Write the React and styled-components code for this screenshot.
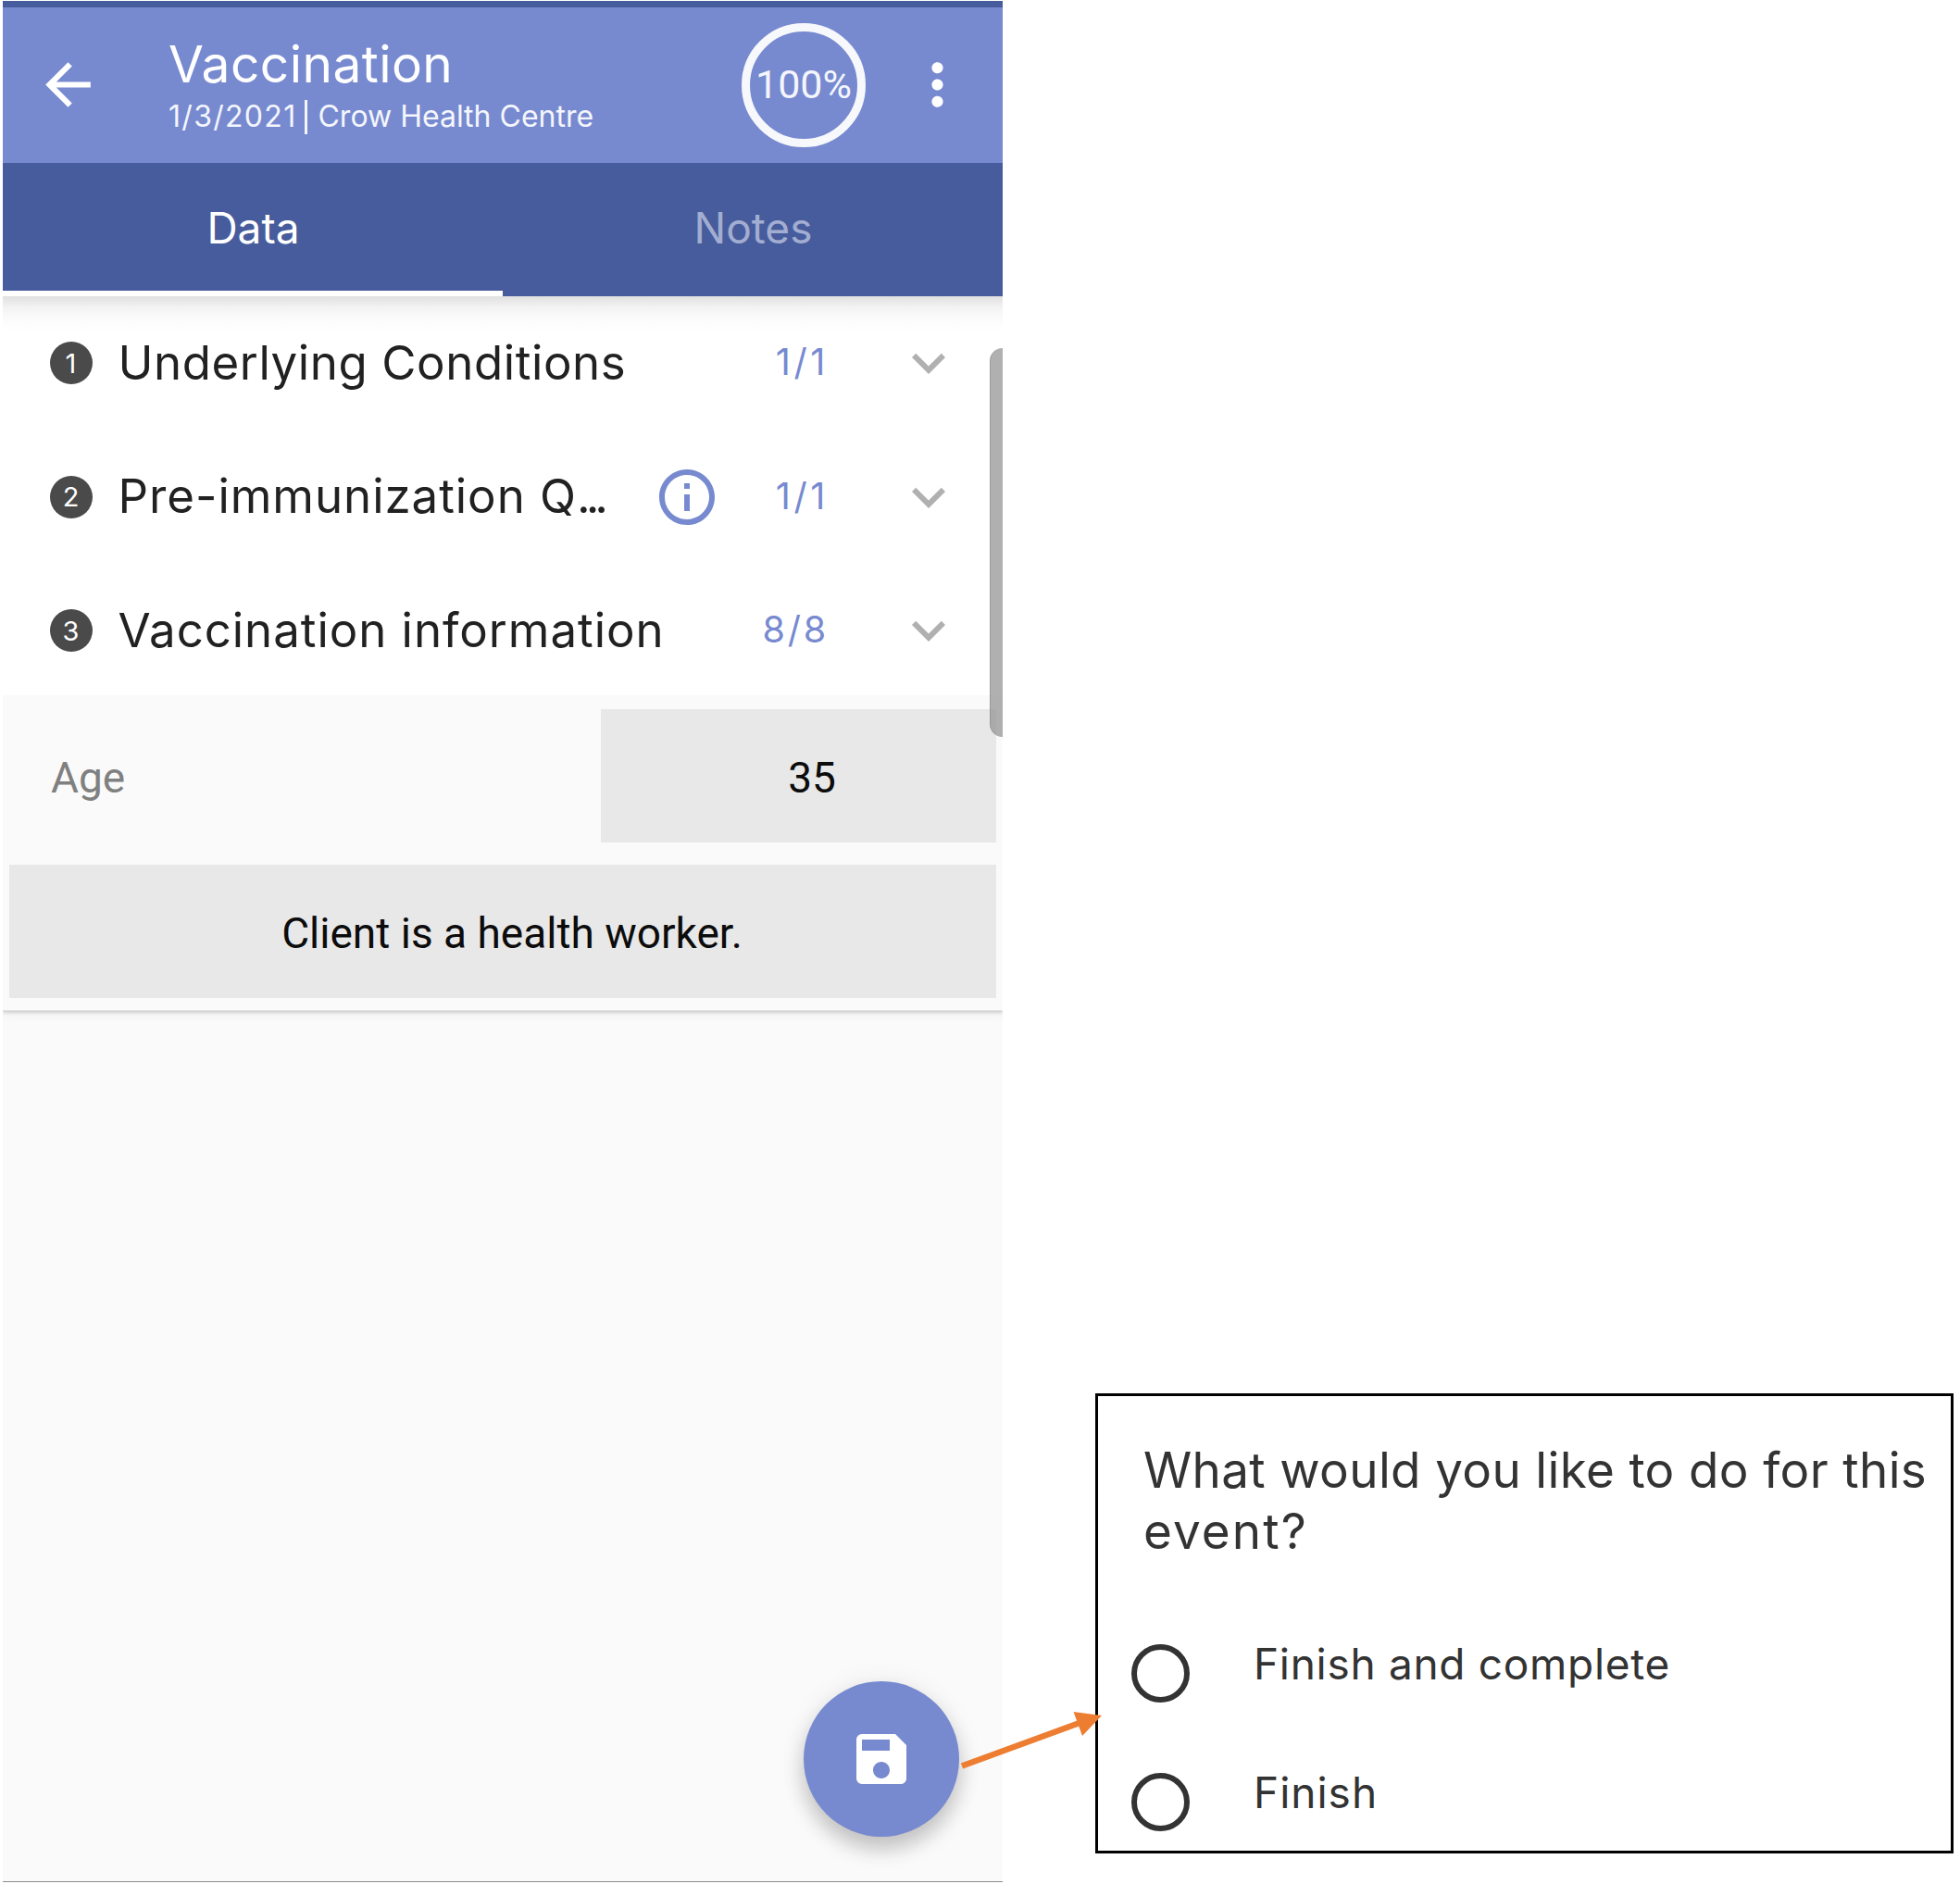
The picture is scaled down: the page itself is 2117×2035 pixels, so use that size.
import React from 'react';
import styled, { createGlobalStyle } from 'styled-components';
import { MdArrowBack, MdExpandMore, MdInfoOutline, MdMoreVert, MdSave } from 'react-icons/md';

const colors = {
  primary: '#778ad0',
  primaryDark: '#475c9c',
  surface: '#fafafa',
  field: '#e8e8e8',
  ink: '#212121',
};

const GlobalStyle = createGlobalStyle`
  * { box-sizing: border-box; }
  body {
    margin: 0;
    background: #ffffff;
    font-family: Inter, Roboto, sans-serif;
    font-weight: 400;
    overflow: hidden;
  }
  svg { display: block; flex: none; }
`;

const Page = styled.main`
  position: relative;
  display: flex;
  align-items: flex-start;
  gap: 100px;
  width: 2117px;
  height: 2035px;
  padding: 1px 0 0 3px;
`;

const Phone = styled.section`
  position: relative;
  display: flex;
  flex-direction: column;
  width: 1080px;
  height: 2032px;
  background: ${colors.surface};
  border-bottom: 1px solid #8c8c8c;
`;

const StatusBar = styled.div`
  height: 7px;
  background: ${colors.primaryDark};
`;

const AppBar = styled.header`
  display: flex;
  align-items: center;
  height: 168px;
  padding: 0 34px 1px;
  color: #ffffff;
  background: ${colors.primary};
`;

const Heading = styled.div`
  flex: 1;
  margin-left: 72px;
  padding-top: 2px;
`;

const Title = styled.h1`
  margin: 0 0 7px;
  font-size: 55px;
  font-weight: 400;
  line-height: 60px;
  letter-spacing: 0.45px;
`;

const Subtitle = styled.div`
  display: flex;
  align-items: center;
  height: 40px;
  font-size: 32px;
  line-height: 40px;
  color: #f4f6fc;
`;

const EventDate = styled.span`
  letter-spacing: 1.3px;
`;

const Separator = styled.span`
  width: 3px;
  height: 37px;
  margin: 0 11px 0 9px;
  background: #f4f6fc;
`;

const Progress = styled.div`
  display: flex;
  align-items: center;
  justify-content: center;
  width: 134px;
  height: 134px;
  margin-right: 41px;
  padding-bottom: 1px;
  border: 9px solid #f7f8fc;
  border-radius: 50%;
  font-family: Roboto, sans-serif;
  font-size: 43px;
  color: #f4f6fc;
`;

const Tabs = styled.nav`
  display: grid;
  grid-template-columns: 1fr 1fr;
  height: 144px;
  background: ${colors.primaryDark};
`;

const Tab = styled.div`
  display: flex;
  align-items: center;
  justify-content: center;
  padding: 1px 0 0 1px;
  border-bottom: 6px solid ${(p) => (p.$active ? '#ffffff' : 'transparent')};
  font-size: 46px;
  color: ${(p) => (p.$active ? '#ffffff' : '#a2add1')};
`;

const SectionList = styled.div`
  height: 431px;
  background: linear-gradient(#e0e0e0 0, #f3f3f3 12px, #fbfbfb 24px, #ffffff 38px);
`;

const SectionRow = styled.div`
  display: flex;
  align-items: center;
  height: 144.5px;
  padding: 0 44px 0 50.5px;
`;

const Badge = styled.span`
  display: flex;
  align-items: center;
  justify-content: center;
  width: 46px;
  height: 46px;
  border-radius: 50%;
  font-size: 29px;
  color: #ffffff;
  background: #4a4a4a;
`;

const SectionTitle = styled.span`
  flex: 1;
  margin-left: 28px;
  padding-bottom: 2px;
  font-size: 51px;
  letter-spacing: ${(p) => p.$tracking}px;
  white-space: nowrap;
  color: ${colors.ink};
`;

const Ellipsis = styled.span`
  letter-spacing: -5px;
`;

const InfoIcon = styled(MdInfoOutline)`
  margin-right: 31px;
  color: ${colors.primary};
`;

const Count = styled.span`
  width: 86px;
  margin-right: 72px;
  padding-bottom: 2px;
  font-size: 39.5px;
  letter-spacing: ${(p) => p.$tracking}px;
  text-align: right;
  color: ${colors.primary};
`;

const Fields = styled.div`
  display: flex;
  flex-direction: column;
  gap: 24px;
  height: 341px;
  padding: 15px 7px 0;
  border-bottom: 1px solid #e2e2e2;
  box-shadow: 0 2px 3px #cfcfcf, 0 4px 10px #f0f0f0;
  clip-path: inset(0 0 -20px 0);
  background: ${colors.surface};
`;

const Field = styled.div`
  display: flex;
  height: 144px;
  font-family: Roboto, sans-serif;
  font-size: 46px;
`;

const FieldLabel = styled.span`
  display: flex;
  align-items: center;
  width: 639px;
  padding: 4px 0 0 45px;
  color: #808080;
`;

const FieldValue = styled.span`
  display: flex;
  flex: 1;
  align-items: center;
  justify-content: center;
  padding: 4px 0 0 ${(p) => p.$inset}px;
  color: #0c0c0c;
  background: ${colors.field};
`;

const ScrollThumb = styled.div`
  position: absolute;
  top: 375px;
  right: 0;
  width: 14px;
  height: 420px;
  border-left: 1px solid rgba(0, 0, 0, 0.12);
  border-radius: 14px 0 0 14px;
  background: rgba(145, 145, 145, 0.72);
`;

const SaveButton = styled.button`
  position: absolute;
  right: 47px;
  bottom: 48px;
  display: flex;
  align-items: center;
  justify-content: center;
  width: 168px;
  height: 168px;
  padding: 0;
  border: 0;
  border-radius: 50%;
  color: #ffffff;
  background: ${colors.primary};
  box-shadow: 0 14px 22px rgba(0, 0, 0, 0.2), 0 2px 30px rgba(0, 0, 0, 0.07);
`;

const Dialog = styled.section`
  width: 927px;
  height: 497px;
  margin-top: 1504px;
  padding: 47px 0 0 36px;
  border: 3px solid #000000;
  background: #ffffff;
  color: #333333;
`;

const Question = styled.h2`
  margin: 0 0 84px 13px;
  font-size: 53px;
  font-weight: 400;
  line-height: 66px;
  letter-spacing: 0.35px;
  white-space: nowrap;
`;

const LastWord = styled.span`
  letter-spacing: 2.1px;
`;

const Option = styled.div`
  display: flex;
  height: 138.5px;
  font-size: 46px;
  line-height: 52px;
`;

const Radio = styled.span`
  width: 63px;
  height: 63px;
  margin: 5px 69px 0 0;
  border: 6px solid #333333;
  border-radius: 50%;
`;

const OptionLabel = styled.span`
  letter-spacing: ${(p) => p.$tracking}px;
`;

const Callout = styled.svg`
  position: absolute;
  left: 1030px;
  top: 1840px;
`;

const sections = [
  { title: 'Underlying Conditions', tracking: 0.58, count: '1/1', countTracking: 3.6 },
  { title: 'Pre-immunization Q', tracking: 0.95, truncated: true, info: true, count: '1/1', countTracking: 3.6 },
  { title: 'Vaccination information', tracking: 0.95, count: '8/8', countTracking: 2.8 },
];

export default function App() {
  return (
    <Page>
      <GlobalStyle />
      <Phone>
        <StatusBar />
        <AppBar>
          <MdArrowBack size={73} />
          <Heading>
            <Title>Vaccination</Title>
            <Subtitle>
              <EventDate>1/3/2021</EventDate>
              <Separator />
              <span>Crow Health Centre</span>
            </Subtitle>
          </Heading>
          <Progress>100%</Progress>
          <MdMoreVert size={73} />
        </AppBar>
        <Tabs>
          <Tab $active>Data</Tab>
          <Tab>Notes</Tab>
        </Tabs>
        <SectionList>
          {sections.map((s, i) => (
            <SectionRow key={s.title}>
              <Badge>{i + 1}</Badge>
              <SectionTitle $tracking={s.tracking}>
                {s.title}
                {s.truncated && <Ellipsis>...</Ellipsis>}
              </SectionTitle>
              {s.info && <InfoIcon size={72} />}
              <Count $tracking={s.countTracking}>{s.count}</Count>
              <MdExpandMore size={72} color="#b0b0b0" />
            </SectionRow>
          ))}
        </SectionList>
        <Fields>
          <Field>
            <FieldLabel>Age</FieldLabel>
            <FieldValue $inset={29}>35</FieldValue>
          </Field>
          <Field>
            <FieldValue $inset={20}>Client is a health worker.</FieldValue>
          </Field>
        </Fields>
        <ScrollThumb />
        <SaveButton aria-label="Save">
          <MdSave size={72} />
        </SaveButton>
      </Phone>
      <Dialog>
        <Question>
          What would you like to do for this
          <br />
          <LastWord>event?</LastWord>
        </Question>
        <Option>
          <Radio />
          <OptionLabel $tracking={0.7}>Finish and complete</OptionLabel>
        </Option>
        <Option>
          <Radio />
          <OptionLabel $tracking={1}>Finish</OptionLabel>
        </Option>
      </Dialog>
      <Callout width="170" height="80" viewBox="0 0 170 80">
        <path d="M9 67.5 L136 21" stroke="#ed7d31" strokeWidth="6.5" />
        <path d="M129.5 9 L160 13 L139 35 Z" fill="#ed7d31" />
      </Callout>
    </Page>
  );
}
